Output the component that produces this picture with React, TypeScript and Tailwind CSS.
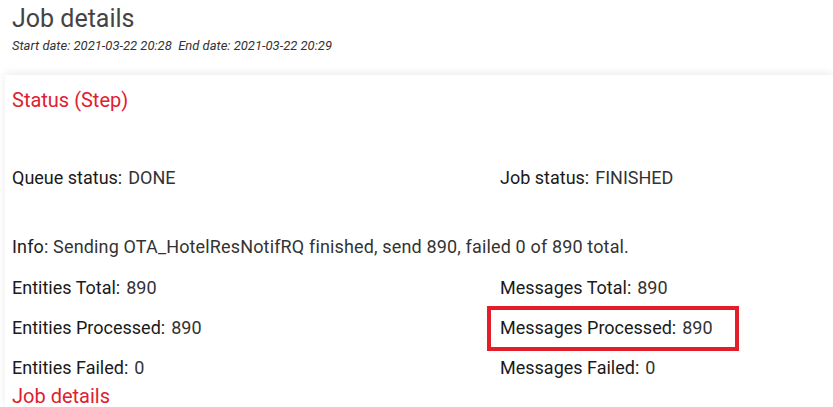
import React from 'react'

function Field({ label, value }: { label: string; value: string }) {
  return (
    <div className="flex items-center gap-[6px] text-[18px] leading-5">
      <span className="text-[#1a1a1a]">{label}:</span>
      <span className="text-[#333]">{value}</span>
    </div>
  )
}

export default function App() {
  return (
    <div className="relative w-[833px] h-[407px] overflow-hidden bg-white font-['Roboto',sans-serif]">
      <div className="px-3 pt-[5px]">
        <h1 className="text-[25px] leading-7 text-[#444]">Job details</h1>
        <p className="mt-[5px] text-[13px] leading-4 italic text-[#333]">
          Start date: 2021-03-22 20:28&nbsp;&nbsp;End date: 2021-03-22 20:29
        </p>
      </div>
      <div className="ml-[5px] mt-[21px] bg-white shadow-[0_-2px_8px_rgba(0,0,0,0.08)] px-[7px] pt-[13px]">
        <h2 className="text-[20px] leading-6 text-[#e0202e]">Status (Step)</h2>
        <div className="mt-[56px] grid grid-cols-[488px_1fr]">
          <Field label="Queue status" value="DONE" />
          <Field label="Job status" value="FINISHED" />
        </div>
        <p className="mt-[49px] text-[18px] leading-5 tracking-[0.15px] text-[#333]">
          <span className="text-[#1a1a1a]">Info</span>: Sending OTA_HotelResNotifRQ finished, send 890, failed 0 of 890 total.
        </p>
        <div className="mt-[21px] grid grid-cols-[488px_1fr] gap-y-[20px]">
          <Field label="Entities Total" value="890" />
          <Field label="Messages Total" value="890" />
          <Field label="Entities Processed" value="890" />
          <Field label="Messages Processed" value="890" />
          <Field label="Entities Failed" value="0" />
          <Field label="Messages Failed" value="0" />
        </div>
        <h2 className="mt-[6px] text-[20px] leading-6 text-[#e0202e]">Job details</h2>
      </div>
      <div className="absolute left-[487px] top-[306px] w-[252px] h-[45px] border-4 border-[#e31e2a]" />
    </div>
  )
}
